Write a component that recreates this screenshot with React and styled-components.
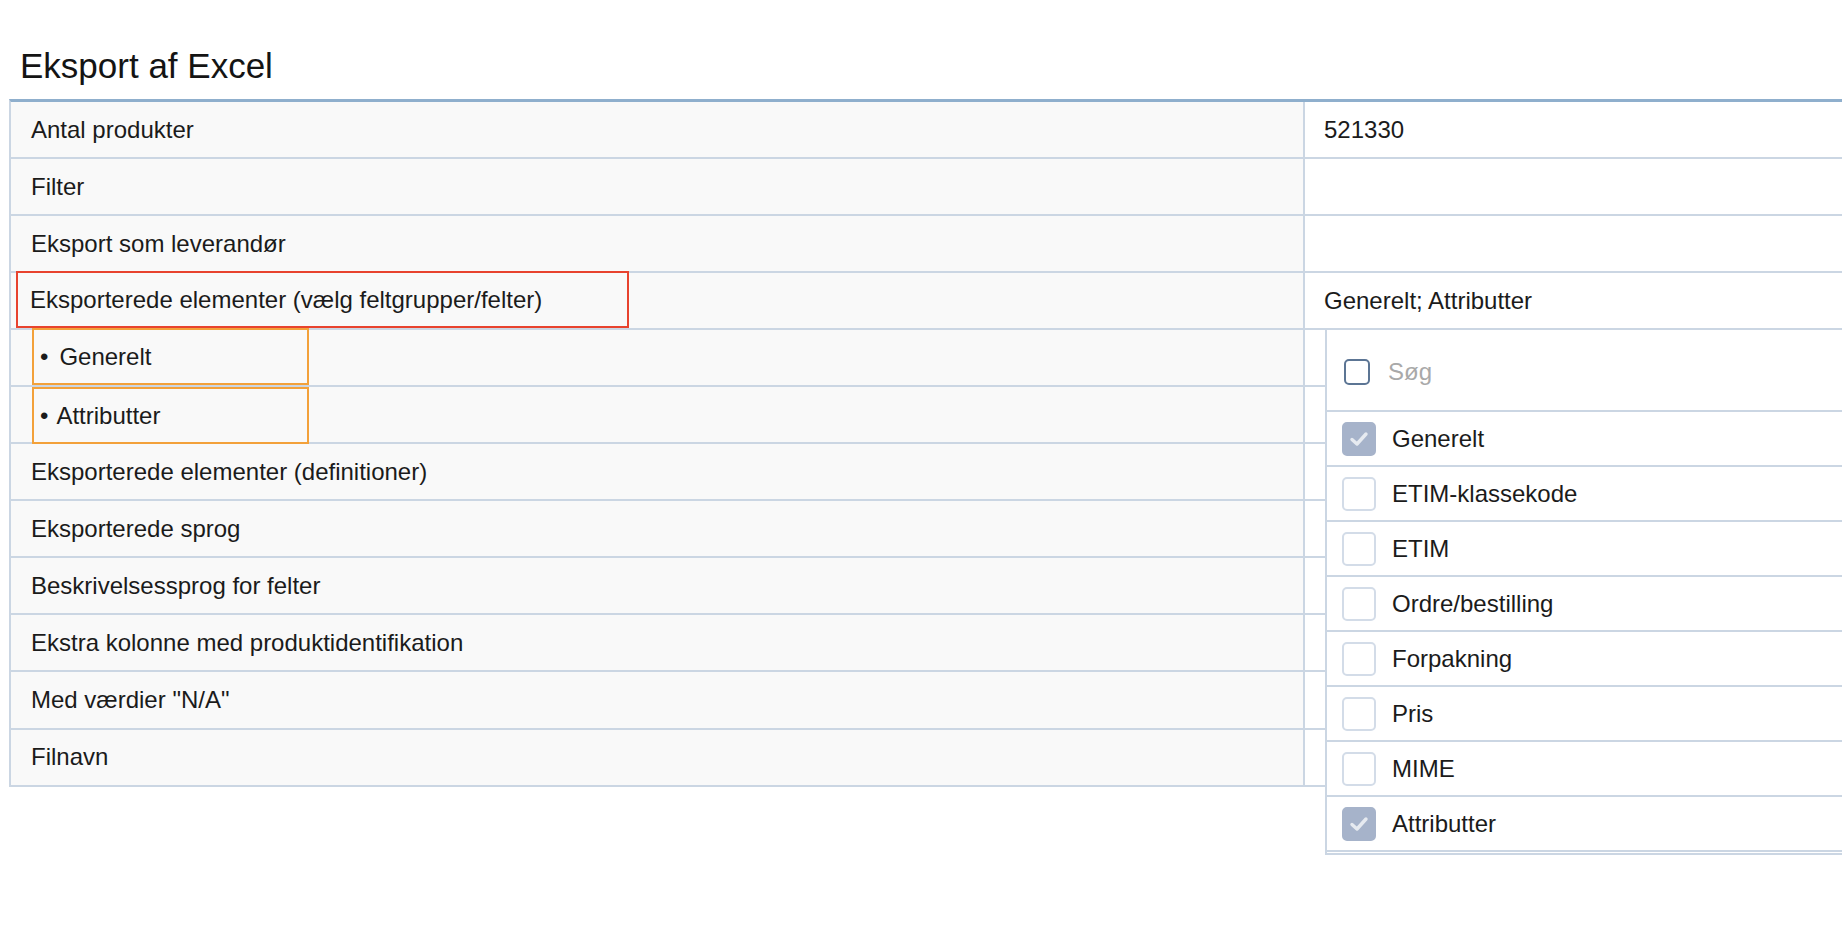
import React from "react";
import styled, { createGlobalStyle } from "styled-components";

const Global = createGlobalStyle`
  html, body { margin: 0; padding: 0; background: #fff; }
  body { overflow: hidden; font-family: "Liberation Sans", Arial, sans-serif; color: #1b1b1b; }
  * { box-sizing: border-box; }
`;

const Page = styled.div`
  width: 1842px;
  height: 944px;
  overflow: hidden;
  padding: 45px 0 0 9px;
`;

const Title = styled.h1`
  margin: 0 0 12px 11px;
  font-size: 35px;
  line-height: 42px;
  font-weight: 400;
  color: #141414;
`;

const Table = styled.div`
  position: relative;
  width: 2000px;
  border-top: 3px solid #8fafcd;
  border-left: 2px solid #cbd6e3;
`;

const Row = styled.div`
  display: grid;
  grid-template-columns: 1294px 1fr;
  height: 57.05px;
  border-bottom: 2px solid #cbd6e3;
`;

const LabelCell = styled.div`
  display: flex;
  align-items: center;
  padding-left: 20px;
  background: #f9f9f9;
  border-right: 2px solid #cbd6e3;
  font-size: 24px;
`;

const ValueCell = styled.div`
  display: flex;
  align-items: center;
  padding-left: 19px;
  background: #fff;
  font-size: 24px;
`;

const Marked = styled.div`
  display: flex;
  align-items: center;
  align-self: stretch;
  width: ${(p) => p.$w}px;
  margin: ${(p) => p.$m};
  padding-left: ${(p) => p.$pl}px;
  border: 2px solid ${(p) => p.$color};
`;

const Bullet = styled.span`
  margin-right: ${(p) => p.$gap}px;
`;

const Dropdown = styled.div`
  position: absolute;
  top: 228px;
  left: 1314px;
  width: 700px;
  background: #fff;
  border-left: 2px solid #cbd6e3;
  border-bottom: 2px solid #cbd6e3;
  padding-bottom: 1px;
`;

const SearchRow = styled.div`
  display: flex;
  align-items: center;
  gap: 18px;
  height: 82px;
  padding: 3px 0 0 17px;
  border-bottom: 2px solid #cbd6e3;
`;

const SearchBox = styled.span`
  width: 26px;
  height: 26px;
  border: 2px solid #5c7594;
  border-radius: 5px;
`;

const SearchText = styled.span`
  font-size: 24px;
  color: #a9a9a9;
`;

const Item = styled.div`
  display: flex;
  align-items: center;
  gap: 16px;
  height: 55px;
  padding-left: 15px;
  border-bottom: 2px solid #cbd6e3;
  font-size: 24px;
`;

const Box = styled.span`
  display: flex;
  align-items: center;
  justify-content: center;
  width: 34px;
  height: 34px;
  border-radius: 5px;
  border: 2px solid ${(p) => (p.$checked ? "#a6b3ca" : "#d3dce8")};
  background: ${(p) => (p.$checked ? "#a6b3ca" : "#fff")};
`;

const Check = () => (
  <svg width="20" height="16" viewBox="0 0 20 16">
    <path d="M3 8.5 L8 13 L17 3" fill="none" stroke="#e6eaf0" strokeWidth="3.4" strokeLinecap="round" strokeLinejoin="round" />
  </svg>
);

const rows = [
  { label: "Antal produkter", value: "521330" },
  { label: "Filter" },
  { label: "Eksport som leverandør" },
  { label: "Eksporterede elementer (vælg feltgrupper/felter)", value: "Generelt; Attributter", mark: "red" },
  { label: "Generelt", mark: "orange", gap: 11 },
  { label: "Attributter", mark: "orange", gap: 8, m: "0 0 -2px 1px" },
  { label: "Eksporterede elementer (definitioner)" },
  { label: "Eksporterede sprog" },
  { label: "Beskrivelsessprog for felter" },
  { label: "Ekstra kolonne med produktidentifikation" },
  { label: 'Med værdier "N/A"' },
  { label: "Filnavn" },
];

const options = [
  { name: "Generelt", checked: true },
  { name: "ETIM-klassekode" },
  { name: "ETIM" },
  { name: "Ordre/bestilling" },
  { name: "Forpakning" },
  { name: "Pris" },
  { name: "MIME" },
  { name: "Attributter", checked: true },
];

const renderLabel = (r) => {
  if (r.mark === "red") {
    return (
      <Marked $color="#e8432e" $w={613} $m="-2px 0 0 -15px" $pl={12}>
        {r.label}
      </Marked>
    );
  }
  if (r.mark === "orange") {
    return (
      <Marked $color="#f3a13a" $w={277} $m={r.m || "-2px 0 0 1px"} $pl={6}>
        <Bullet $gap={r.gap}>•</Bullet>
        {r.label}
      </Marked>
    );
  }
  return r.label;
};

export default function App() {
  return (
    <>
      <Global />
      <Page>
        <Title>Eksport af Excel</Title>
        <Table>
          {rows.map((r) => (
            <Row key={r.label}>
              <LabelCell>{renderLabel(r)}</LabelCell>
              <ValueCell>{r.value}</ValueCell>
            </Row>
          ))}
          <Dropdown>
            <SearchRow>
              <SearchBox />
              <SearchText>Søg</SearchText>
            </SearchRow>
            {options.map((o) => (
              <Item key={o.name}>
                <Box $checked={o.checked}>{o.checked && <Check />}</Box>
                {o.name}
              </Item>
            ))}
          </Dropdown>
        </Table>
      </Page>
    </>
  );
}
